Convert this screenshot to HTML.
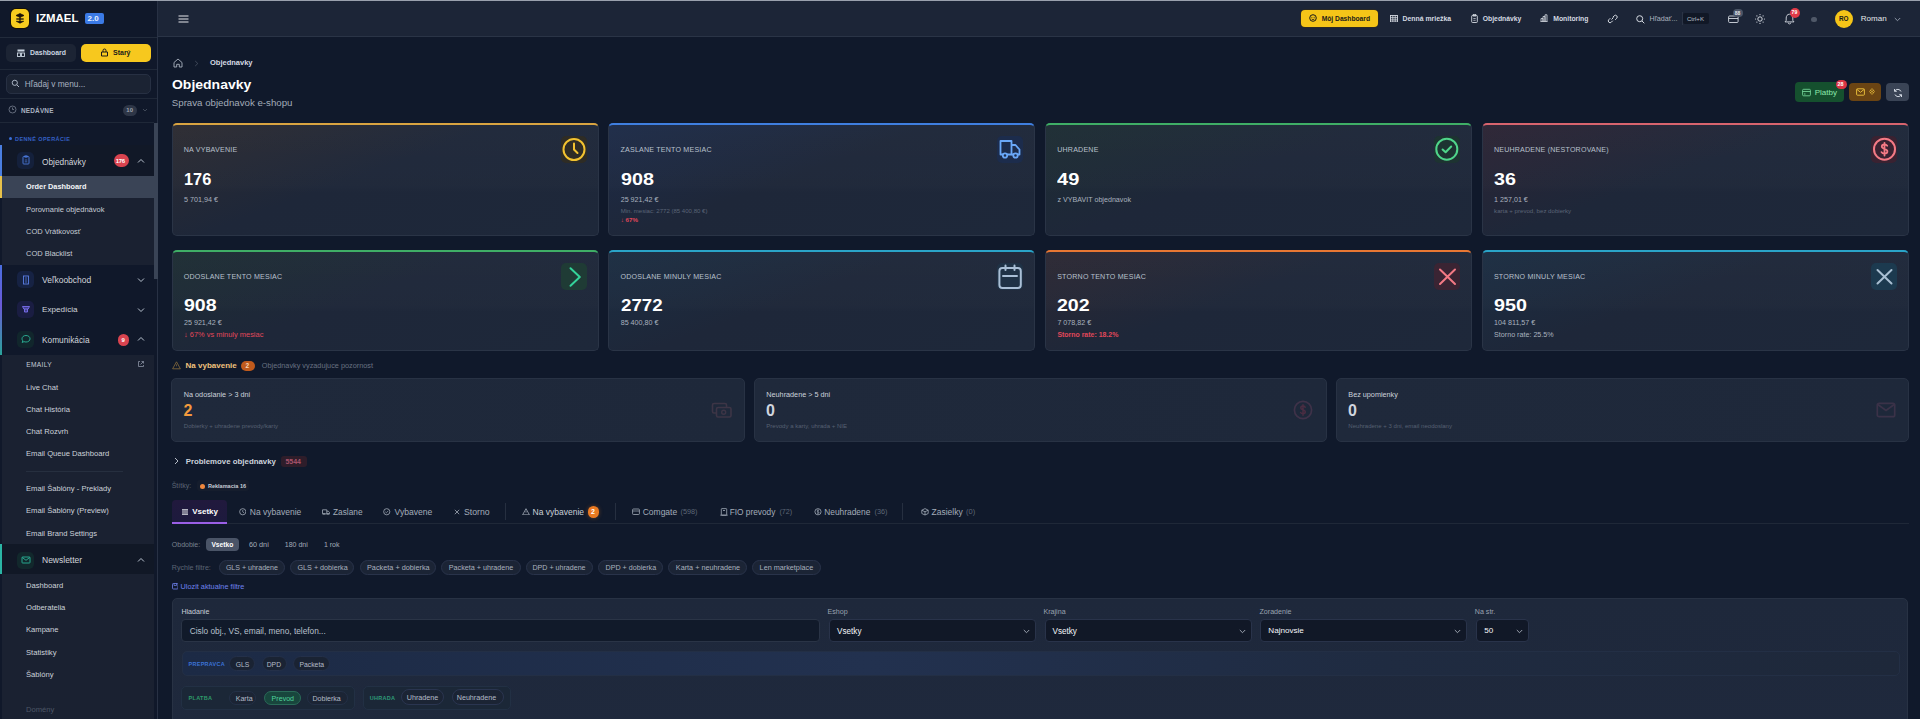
<!DOCTYPE html><html><head><meta charset="utf-8"><style>
html,body{margin:0;padding:0;}
body{width:1920px;height:719px;overflow:hidden;position:relative;background:#10192b;font-family:"Liberation Sans",sans-serif;}
.t{position:absolute;white-space:nowrap;}
.r{position:absolute;box-sizing:border-box;}
</style></head><body>
<div class="r" style="left:0px;top:0px;width:158px;height:719px;background:#10182a;"></div>
<div class="r" style="left:157px;top:0px;width:1px;height:719px;background:#283144;"></div>
<div class="r" style="left:158px;top:0px;width:1762px;height:37px;background:#1c2537;"></div>
<div class="r" style="left:158px;top:36px;width:1762px;height:1px;background:#2a3446;"></div>
<div class="r" style="left:0px;top:0px;width:1920px;height:1px;background:#9aa1ad;"></div>
<div class="r" style="left:0px;top:37px;width:157px;height:1px;background:#222b3b;"></div>
<div class="r" style="left:11px;top:9.3px;width:18px;height:18.4px;background:#f7cc1f;border-radius:5px;box-shadow:0 0 0 1px #141008;"></div>
<svg class="r" style="left:15px;top:12px;" width="10" height="13" viewBox="0 0 10 13" fill="none"><path d="M1 3.5 L5 1.6 L9 3.5 L5 5.3 Z" fill="#1a1208" stroke="#1a1208" stroke-width="0.8" stroke-linejoin="round"/><path d="M1.3 7 H8.7" stroke="#1a1208" stroke-width="1.3"/><path d="M1.3 9.3 H8.7 L5 11.2 Z" fill="#1a1208" stroke="#1a1208" stroke-width="0.7" stroke-linejoin="round"/><path d="M5 5 V11" stroke="#1a1208" stroke-width="1.2"/></svg>
<div class="t" style="left:36px;top:13.00px;font-size:11.4px;line-height:11.4px;font-weight:700;color:#ffffff;letter-spacing:0px;">IZMAEL</div>
<div class="r" style="left:85px;top:13px;width:19px;height:11px;background:#3b7ae6;border-radius:2px;"></div>
<div class="t" style="left:87.5px;top:15.00px;font-size:8px;line-height:8px;font-weight:700;color:#e8f0ff;letter-spacing:0px;">2.0</div>
<div class="r" style="left:6px;top:44px;width:70px;height:18px;background:#1c2434;border-radius:5px;"></div>
<svg class="r" style="left:17px;top:49px;" width="8" height="8" viewBox="0 0 8 8" fill="none"><rect x="0.5" y="0.5" width="7" height="2" fill="#cbd5e1"/><rect x="0.5" y="4" width="3" height="3.5" stroke="#cbd5e1" stroke-width="0.9"/><rect x="4.5" y="4" width="3" height="3.5" stroke="#cbd5e1" stroke-width="0.9"/></svg>
<div class="t" style="left:30px;top:50.00px;font-size:6.9px;line-height:6.9px;font-weight:600;color:#cbd5e1;letter-spacing:0px;">Dashboard</div>
<div class="r" style="left:81px;top:44px;width:70px;height:18px;background:#f7c81e;border-radius:5px;"></div>
<svg class="r" style="left:100px;top:48px;" width="9" height="9" viewBox="0 0 9 9" fill="none"><path d="M1.5 4 H7.5 V8 H1.5 Z M3 4 V2.5 A1.5 1.5 0 0 1 6 2.5 V4" stroke="#1a1a1a" stroke-width="1"/></svg>
<div class="t" style="left:113px;top:49.00px;font-size:7px;line-height:7px;font-weight:600;color:#1a1a1a;letter-spacing:0px;">Starý</div>
<div class="r" style="left:0px;top:69px;width:157px;height:1px;background:#1f2838;"></div>
<div class="r" style="left:6px;top:74px;width:145px;height:19.5px;background:#1b2333;border:1px solid #273043;border-radius:5px;"></div>
<svg class="r" style="left:11px;top:79px;" width="9" height="9" viewBox="0 0 9 9" fill="none"><circle cx="3.8" cy="3.8" r="2.6" stroke="#aab4c3" stroke-width="1"/><path d="M5.8 5.8 L8 8" stroke="#aab4c3" stroke-width="1"/></svg>
<div class="t" style="left:24.8px;top:80.00px;font-size:8.3px;line-height:8.3px;font-weight:400;color:#a9b2c0;letter-spacing:0px;">Hľadaj v menu...</div>
<div class="r" style="left:0px;top:98px;width:157px;height:1px;background:#1f2838;"></div>
<svg class="r" style="left:8px;top:105px;" width="9" height="9" viewBox="0 0 9 9" fill="none"><circle cx="4.5" cy="4.5" r="3.5" stroke="#6b7484" stroke-width="0.9"/><path d="M4.5 2.5 V4.5 H6" stroke="#6b7484" stroke-width="0.9"/></svg>
<div class="t" style="left:21px;top:108.00px;font-size:6.4px;line-height:6.4px;font-weight:700;color:#aab3c0;letter-spacing:0.2px;">NEDÁVNE</div>
<div class="r" style="left:123px;top:105px;width:14px;height:11px;background:#2e3647;border-radius:6px;"></div>
<div class="t" style="left:126.3px;top:107.00px;font-size:6px;line-height:6px;font-weight:600;color:#9ca3af;letter-spacing:0px;">10</div>
<svg class="r" style="left:142px;top:107px;" width="6" height="6" viewBox="0 0 6 6" fill="none"><path d="M1 2 L3 4 L5 2" stroke="#4b5563" stroke-width="0.8"/></svg>
<div class="r" style="left:0px;top:122px;width:154px;height:1px;background:#1f2838;"></div>
<div class="r" style="left:154px;top:123px;width:3.5px;height:156px;background:#3a4456;"></div>
<div class="t" style="left:8.5px;top:137.00px;font-size:5px;line-height:5px;font-weight:700;color:#3b6fd8;letter-spacing:0px;"><span style="display:inline-block;width:3px;height:3px;border-radius:2px;background:#3b6fd8;vertical-align:middle;margin-right:2px;position:relative;top:-1px"></span></div>
<div class="t" style="left:15px;top:137.00px;font-size:5.5px;line-height:5.5px;font-weight:700;color:#3560c4;letter-spacing:0.42px;">DENNÉ OPERÁCIE</div>
<div class="r" style="left:2px;top:145px;width:152px;height:31px;background:#111827;"></div>
<div class="r" style="left:2px;top:198px;width:152px;height:67px;background:#1a2131;"></div>
<div class="r" style="left:0px;top:145px;width:2px;height:31px;background:#4a7ee0;"></div>
<div class="r" style="left:0px;top:176px;width:2px;height:22px;background:#e8c24a;"></div>
<div class="r" style="left:2px;top:176px;width:152px;height:22px;background:#3a4456;"></div>
<div class="r" style="left:0px;top:265px;width:2px;height:90px;background:linear-gradient(#4a6ee0,#6b5ad8 45%,#2aa39a);"></div>
<div class="r" style="left:17px;top:151.7px;width:17px;height:17.0px;background:#14203b;border-radius:5px;"></div>
<svg class="r" style="left:20.5px;top:155.2px;" width="10" height="10" viewBox="0 0 10 10" fill="none"><rect x="2" y="1.5" width="6" height="7.5" rx="0.8" stroke="#4d7de0" stroke-width="0.9"/><rect x="3.5" y="0.7" width="3" height="1.6" rx="0.4" stroke="#4d7de0" stroke-width="0.7"/><path d="M3.8 5 H6.2 M3.8 6.8 H6.2" stroke="#4d7de0" stroke-width="0.7"/></svg>
<div class="t" style="left:42px;top:158.00px;font-size:8.3px;line-height:8.3px;font-weight:500;color:#d1d5db;letter-spacing:0px;">Objednávky</div>
<div class="r" style="left:114px;top:154.4px;width:15px;height:12.299999999999983px;background:#d9434f;border-radius:7px;"></div>
<div class="t" style="left:115.8px;top:158.00px;font-size:6px;line-height:6px;font-weight:700;color:#ffffff;letter-spacing:-0.3px;">176</div>
<svg class="r" style="left:137px;top:158px;" width="8" height="6" viewBox="0 0 8 6" fill="none"><path d="M1 4.5 L4 1.5 L7 4.5" stroke="#cbd5e1" stroke-width="0.9"/></svg>
<div class="t" style="left:26px;top:183.00px;font-size:7.35px;line-height:7.35px;font-weight:600;color:#f3f4f6;letter-spacing:0px;">Order Dashboard</div>
<div class="t" style="left:26px;top:206.00px;font-size:7.5px;line-height:7.5px;font-weight:400;color:#c6ccd5;letter-spacing:0px;">Porovnanie objednávok</div>
<div class="t" style="left:26px;top:228.00px;font-size:7.5px;line-height:7.5px;font-weight:400;color:#c6ccd5;letter-spacing:0px;">COD Vrátkovosť</div>
<div class="t" style="left:26px;top:250.00px;font-size:7.5px;line-height:7.5px;font-weight:400;color:#c6ccd5;letter-spacing:0px;">COD Blacklist</div>
<div class="r" style="left:17px;top:271px;width:17px;height:17px;background:#162243;border-radius:5px;"></div>
<svg class="r" style="left:20.5px;top:274.5px;" width="10" height="10" viewBox="0 0 10 10" fill="none"><rect x="2.5" y="1" width="5" height="8" stroke="#5a7ee6" stroke-width="0.9"/><path d="M4 3 H6 M4 5 H6 M4 7 H6" stroke="#5a7ee6" stroke-width="0.7"/></svg>
<div class="t" style="left:42px;top:276.00px;font-size:8.5px;line-height:8.5px;font-weight:500;color:#d1d5db;letter-spacing:0px;">Veľkoobchod</div>
<svg class="r" style="left:137px;top:277px;" width="8" height="6" viewBox="0 0 8 6" fill="none"><path d="M1 1.5 L4 4.5 L7 1.5" stroke="#cbd5e1" stroke-width="0.9"/></svg>
<div class="r" style="left:17px;top:300.7px;width:17px;height:17.0px;background:#1a1d42;border-radius:5px;"></div>
<svg class="r" style="left:20.5px;top:304.2px;" width="10" height="10" viewBox="0 0 10 10" fill="none"><path d="M1.5 2.5 H8.5 L7.2 5 H2.8 Z M3.5 5 V8 H6.5 V5" stroke="#7b6ff0" stroke-width="0.9" fill="#7b6ff0" fill-opacity="0.4"/></svg>
<div class="t" style="left:42px;top:306.00px;font-size:8.1px;line-height:8.1px;font-weight:500;color:#d1d5db;letter-spacing:0px;">Expedícia</div>
<svg class="r" style="left:137px;top:306.5px;" width="8" height="6" viewBox="0 0 8 6" fill="none"><path d="M1 1.5 L4 4.5 L7 1.5" stroke="#cbd5e1" stroke-width="0.9"/></svg>
<div class="r" style="left:17px;top:330.5px;width:17px;height:17.0px;background:#11262c;border-radius:5px;"></div>
<svg class="r" style="left:20.5px;top:334.0px;" width="10" height="10" viewBox="0 0 10 10" fill="none"><path d="M5 1.5 C7.5 1.5 9 3 9 4.8 C9 6.6 7.5 8 5 8 C4.3 8 3.6 7.9 3 7.6 L1.2 8.5 L1.8 6.8 C1.2 6.2 1 5.5 1 4.8 C1 3 2.5 1.5 5 1.5 Z" stroke="#2bb59a" stroke-width="0.9"/></svg>
<div class="t" style="left:42px;top:336.00px;font-size:8.3px;line-height:8.3px;font-weight:500;color:#d1d5db;letter-spacing:0px;">Komunikácia</div>
<div class="r" style="left:118px;top:333.5px;width:11px;height:12.0px;background:#d9434f;border-radius:6px;"></div>
<div class="t" style="left:121.5px;top:337.00px;font-size:6px;line-height:6px;font-weight:700;color:#ffffff;letter-spacing:0px;">9</div>
<svg class="r" style="left:137px;top:336px;" width="8" height="6" viewBox="0 0 8 6" fill="none"><path d="M1 4.5 L4 1.5 L7 4.5" stroke="#cbd5e1" stroke-width="0.9"/></svg>
<div class="r" style="left:2px;top:355px;width:152px;height:189px;background:#1a2131;"></div>
<div class="t" style="left:26.2px;top:362.00px;font-size:6.6px;line-height:6.6px;font-weight:500;color:#c6ccd5;letter-spacing:0.35px;">EMAILY</div>
<svg class="r" style="left:137px;top:360px;" width="8" height="8" viewBox="0 0 8 8" fill="none"><path d="M3 1.5 H1.5 V6.5 H6.5 V5 M4.5 1.5 H6.5 V3.5 M6.5 1.5 L3.5 4.5" stroke="#8a93a3" stroke-width="0.8"/></svg>
<div class="t" style="left:26.2px;top:384.00px;font-size:8.1px;line-height:8.1px;font-weight:400;color:#ccd2da;letter-spacing:0px;transform:scaleX(0.94);transform-origin:0 0;">Live Chat</div>
<div class="t" style="left:26.2px;top:406.00px;font-size:8.1px;line-height:8.1px;font-weight:400;color:#ccd2da;letter-spacing:0px;transform:scaleX(0.94);transform-origin:0 0;">Chat História</div>
<div class="t" style="left:26.2px;top:428.00px;font-size:8.1px;line-height:8.1px;font-weight:400;color:#ccd2da;letter-spacing:0px;transform:scaleX(0.94);transform-origin:0 0;">Chat Rozvrh</div>
<div class="t" style="left:26.2px;top:450.00px;font-size:8.1px;line-height:8.1px;font-weight:400;color:#ccd2da;letter-spacing:0px;transform:scaleX(0.94);transform-origin:0 0;">Email Queue Dashboard</div>
<div class="r" style="left:26px;top:470.5px;width:97px;height:0.8000000000000114px;background:#262f3f;"></div>
<div class="t" style="left:26.2px;top:485.00px;font-size:8.1px;line-height:8.1px;font-weight:400;color:#ccd2da;letter-spacing:0px;transform:scaleX(0.94);transform-origin:0 0;">Email Šablóny - Preklady</div>
<div class="t" style="left:26.2px;top:507.00px;font-size:8.1px;line-height:8.1px;font-weight:400;color:#ccd2da;letter-spacing:0px;transform:scaleX(0.94);transform-origin:0 0;">Email Šablóny (Preview)</div>
<div class="t" style="left:26.2px;top:530.00px;font-size:8.1px;line-height:8.1px;font-weight:400;color:#ccd2da;letter-spacing:0px;transform:scaleX(0.94);transform-origin:0 0;">Email Brand Settings</div>
<div class="r" style="left:2px;top:544px;width:152px;height:30px;background:#111826;"></div>
<div class="r" style="left:0px;top:544px;width:2px;height:30px;background:#2bb5a5;"></div>
<div class="r" style="left:17px;top:551.7px;width:17px;height:17.0px;background:#12282c;border-radius:5px;"></div>
<svg class="r" style="left:20.5px;top:555.2px;" width="10" height="10" viewBox="0 0 10 10" fill="none"><rect x="1" y="2" width="8" height="6" rx="0.6" stroke="#2bb59a" stroke-width="0.9"/><path d="M1.3 2.5 L5 5.3 L8.7 2.5" stroke="#2bb59a" stroke-width="0.9"/></svg>
<div class="t" style="left:42px;top:556.00px;font-size:8.5px;line-height:8.5px;font-weight:500;color:#d1d5db;letter-spacing:0px;">Newsletter</div>
<svg class="r" style="left:137px;top:556.5px;" width="8" height="6" viewBox="0 0 8 6" fill="none"><path d="M1 4.5 L4 1.5 L7 4.5" stroke="#cbd5e1" stroke-width="0.9"/></svg>
<div class="r" style="left:2px;top:574px;width:152px;height:145px;background:#1a2131;"></div>
<div class="t" style="left:26.2px;top:582.00px;font-size:8.1px;line-height:8.1px;font-weight:400;color:#ccd2da;letter-spacing:0px;transform:scaleX(0.94);transform-origin:0 0;">Dashboard</div>
<div class="t" style="left:26.2px;top:604.00px;font-size:8.1px;line-height:8.1px;font-weight:400;color:#ccd2da;letter-spacing:0px;transform:scaleX(0.94);transform-origin:0 0;">Odberatelia</div>
<div class="t" style="left:26.2px;top:626.00px;font-size:8.1px;line-height:8.1px;font-weight:400;color:#ccd2da;letter-spacing:0px;transform:scaleX(0.94);transform-origin:0 0;">Kampane</div>
<div class="t" style="left:26.2px;top:649.00px;font-size:8.1px;line-height:8.1px;font-weight:400;color:#ccd2da;letter-spacing:0px;transform:scaleX(0.94);transform-origin:0 0;">Statistiky</div>
<div class="t" style="left:26.2px;top:671.00px;font-size:8.1px;line-height:8.1px;font-weight:400;color:#ccd2da;letter-spacing:0px;transform:scaleX(0.94);transform-origin:0 0;">Šablóny</div>
<div class="t" style="left:26.2px;top:706.00px;font-size:8.1px;line-height:8.1px;font-weight:400;color:#4d5666;letter-spacing:0px;transform:scaleX(0.94);transform-origin:0 0;">Domény</div>
<svg class="r" style="left:177.5px;top:14.5px;" width="11" height="8" viewBox="0 0 11 8" fill="none"><path d="M0.5 1 H10.5 M0.5 4 H10.5 M0.5 7 H10.5" stroke="#e5e7eb" stroke-width="1.1"/></svg>
<div class="r" style="left:1300.8px;top:9.7px;width:77.0px;height:17.3px;background:#f5c518;border-radius:4px;box-shadow:0 0 0 0.5px #3a2f10;"></div>
<svg class="r" style="left:1308.5px;top:14.0px;" width="8" height="8" viewBox="0 0 8 8" fill="none"><circle cx="4" cy="4" r="3.3" stroke="#1a1a1a" stroke-width="1"/><circle cx="2.9" cy="3.3" r="0.5" fill="#1a1a1a"/><circle cx="5.1" cy="3.3" r="0.5" fill="#1a1a1a"/><path d="M2.6 5 Q4 6.3 5.4 5" stroke="#1a1a1a" stroke-width="0.8"/></svg>
<div class="t" style="left:1321.7px;top:16.00px;font-size:6.7px;line-height:6.7px;font-weight:600;color:#1a1a1a;letter-spacing:0px;">Môj Dashboard</div>
<svg class="r" style="left:1389.5px;top:14.5px;" width="8" height="7.5" viewBox="0 0 8 7.5" fill="none"><rect x="0.5" y="0.5" width="7" height="6.5" stroke="#d5dae2" stroke-width="0.9"/><path d="M0.5 2.7 H7.5 M0.5 4.9 H7.5 M2.8 0.5 V7 M5.2 0.5 V7" stroke="#d5dae2" stroke-width="0.8"/></svg>
<div class="t" style="left:1402.5px;top:16.00px;font-size:6.9px;line-height:6.9px;font-weight:600;color:#d5dae2;letter-spacing:0px;">Denná mriežka</div>
<svg class="r" style="left:1470.5px;top:14.0px;" width="7" height="9" viewBox="0 0 7 9" fill="none"><rect x="0.7" y="1.5" width="5.6" height="7" rx="0.7" stroke="#d5dae2" stroke-width="0.9"/><rect x="2.2" y="0.5" width="2.6" height="1.6" stroke="#d5dae2" stroke-width="0.7"/><path d="M2.3 4.5 H4.7 M2.3 6.3 H4.7" stroke="#d5dae2" stroke-width="0.7"/></svg>
<div class="t" style="left:1482.8px;top:16.00px;font-size:6.8px;line-height:6.8px;font-weight:600;color:#d5dae2;letter-spacing:0px;">Objednávky</div>
<svg class="r" style="left:1540px;top:14.0px;" width="8" height="8" viewBox="0 0 8 8" fill="none"><path d="M0.5 7.5 H7.5 M1 7.5 V4.5 H3 V7.5 M3 7.5 V2.5 H5 V7.5 M5 7.5 V0.8 H7 V7.5" stroke="#d5dae2" stroke-width="0.8"/></svg>
<div class="t" style="left:1553.3px;top:16.00px;font-size:6.8px;line-height:6.8px;font-weight:600;color:#d5dae2;letter-spacing:0px;">Monitoring</div>
<svg class="r" style="left:1606.5px;top:14px;" width="11" height="10" viewBox="0 0 11 10" fill="none"><path d="M4.5 5.5 L6.5 3.5 M3.3 4.2 L1.8 5.7 A1.7 1.7 0 0 0 4.3 8.2 L5.8 6.7 M5.7 3.3 L7.2 1.8 A1.7 1.7 0 0 1 9.7 4.3 L8.2 5.8" stroke="#d5dae2" stroke-width="1"/></svg>
<svg class="r" style="left:1635.8px;top:14.5px;" width="9" height="9" viewBox="0 0 9 9" fill="none"><circle cx="3.7" cy="3.7" r="3" stroke="#d5dae2" stroke-width="1"/><path d="M6 6 L8.3 8.3" stroke="#d5dae2" stroke-width="1"/></svg>
<div class="t" style="left:1649.5px;top:15.00px;font-size:7.2px;line-height:7.2px;font-weight:400;color:#aab2be;letter-spacing:0px;">Hľadať...</div>
<div class="r" style="left:1683px;top:13px;width:25.5px;height:11px;background:#111826;border-radius:2px;"></div>
<div class="r" style="left:1681.8px;top:12px;width:0.7000000000000455px;height:13px;background:#2b3445;"></div>
<div class="t" style="left:1686.9px;top:16.00px;font-size:6.1px;line-height:6.1px;font-weight:400;color:#b9c0cb;letter-spacing:0px;">Ctrl+K</div>
<svg class="r" style="left:1727.5px;top:14px;" width="11" height="9" viewBox="0 0 11 9" fill="none"><rect x="0.6" y="2" width="9.5" height="6.5" rx="1" stroke="#d5dae2" stroke-width="0.9"/><path d="M0.6 4.5 H10" stroke="#d5dae2" stroke-width="0.9"/></svg>
<div class="r" style="left:1733.3px;top:9.2px;width:10.0px;height:8.3px;background:#4b5567;border-radius:5px;"></div>
<div class="t" style="left:1734.8px;top:11.00px;font-size:5px;line-height:5px;font-weight:700;color:#e5e7eb;letter-spacing:0px;">88</div>
<svg class="r" style="left:1755.1px;top:13.6px;" width="10" height="10" viewBox="0 0 10 10" fill="none"><circle cx="5" cy="5" r="2.2" stroke="#d5dae2" stroke-width="1"/><g fill="#d5dae2"><circle cx="5" cy="0.6" r="0.6"/><circle cx="5" cy="9.4" r="0.6"/><circle cx="0.6" cy="5" r="0.6"/><circle cx="9.4" cy="5" r="0.6"/><circle cx="1.9" cy="1.9" r="0.6"/><circle cx="8.1" cy="8.1" r="0.6"/><circle cx="1.9" cy="8.1" r="0.6"/><circle cx="8.1" cy="1.9" r="0.6"/></g></svg>
<svg class="r" style="left:1783.5px;top:13px;" width="11" height="11.5" viewBox="0 0 11 11.5" fill="none"><path d="M5.5 1.2 C3.3 1.2 2.2 3 2.2 5 V7.4 L1 8.9 H10 L8.8 7.4 V5 C8.8 3 7.7 1.2 5.5 1.2 Z" stroke="#d5dae2" stroke-width="0.9" stroke-linejoin="round"/><path d="M4.2 9.6 A1.3 1.3 0 0 0 6.8 9.6" stroke="#d5dae2" stroke-width="0.9"/></svg>
<div class="r" style="left:1789.7px;top:7.5px;width:10.299999999999955px;height:10.0px;background:#e03a47;border-radius:5px;"></div>
<div class="t" style="left:1791.6px;top:10.00px;font-size:5.2px;line-height:5.2px;font-weight:700;color:#ffffff;letter-spacing:0px;">79</div>
<div class="r" style="left:1810.8px;top:16.7px;width:6.400000000000091px;height:5.800000000000001px;background:#4f5868;border-radius:4px;"></div>
<div class="r" style="left:1834.7px;top:9.7px;width:18.59999999999991px;height:18.3px;background:#f5c518;border-radius:10px;"></div>
<div class="t" style="left:1839px;top:16.00px;font-size:6.4px;line-height:6.4px;font-weight:700;color:#1a1a1a;letter-spacing:0px;">RO</div>
<div class="t" style="left:1860.8px;top:15.00px;font-size:8px;line-height:8px;font-weight:500;color:#e5e7eb;letter-spacing:0px;">Roman</div>
<svg class="r" style="left:1894px;top:16.5px;" width="7" height="5" viewBox="0 0 7 5" fill="none"><path d="M0.8 1 L3.5 3.7 L6.2 1" stroke="#9aa3b1" stroke-width="0.9"/></svg>
<svg class="r" style="left:172.5px;top:58px;" width="10" height="10" viewBox="0 0 10 10" fill="none"><path d="M1 4.5 L5 1 L9 4.5 V9 H6.3 V6.3 H3.7 V9 H1 Z" stroke="#aab3c0" stroke-width="0.9" stroke-linejoin="round"/></svg>
<svg class="r" style="left:194px;top:59.5px;" width="5" height="7" viewBox="0 0 5 7" fill="none"><path d="M1.2 1 L3.8 3.5 L1.2 6" stroke="#4b5465" stroke-width="0.8"/></svg>
<div class="t" style="left:210px;top:59.00px;font-size:7.5px;line-height:7.5px;font-weight:700;color:#d6dbe3;letter-spacing:0px;">Objednavky</div>
<div class="t" style="left:171.6px;top:78.00px;font-size:13.2px;line-height:13.2px;font-weight:700;color:#ffffff;letter-spacing:0px;transform:scaleX(1.06);transform-origin:0 0;">Objednavky</div>
<div class="t" style="left:171.8px;top:98.00px;font-size:9.7px;line-height:9.7px;font-weight:400;color:#a3acb9;letter-spacing:0px;">Sprava objednavok e-shopu</div>
<div class="r" style="left:1795.3px;top:82px;width:48.5px;height:20px;background:#15502e;border-radius:4px;"></div>
<svg class="r" style="left:1801.5px;top:87.5px;" width="9" height="9" viewBox="0 0 9 9" fill="none"><rect x="0.6" y="1.3" width="7.8" height="6.5" rx="1" stroke="#7ee2a3" stroke-width="0.8"/><path d="M0.6 3.5 H8.4 M2 6 H3.5" stroke="#7ee2a3" stroke-width="0.8"/></svg>
<div class="t" style="left:1814.7px;top:89.00px;font-size:8px;line-height:8px;font-weight:500;color:#8be9ac;letter-spacing:0px;">Platby</div>
<div class="r" style="left:1835.8px;top:79.5px;width:11.700000000000045px;height:9.099999999999994px;background:#dc3545;border-radius:5px;"></div>
<div class="t" style="left:1837.6px;top:82.00px;font-size:5.4px;line-height:5.4px;font-weight:700;color:#ffffff;letter-spacing:0px;">28</div>
<div class="r" style="left:1849px;top:83px;width:32px;height:18px;background:#6b4413;border-radius:4px;"></div>
<svg class="r" style="left:1856px;top:87.5px;" width="9" height="8" viewBox="0 0 9 8" fill="none"><rect x="0.6" y="0.8" width="7.8" height="6.4" rx="0.8" stroke="#f2c53d" stroke-width="0.9"/><path d="M0.8 1.3 L4.5 4.3 L8.2 1.3" stroke="#f2c53d" stroke-width="0.9"/></svg>
<svg class="r" style="left:1868.5px;top:88px;" width="6" height="7" viewBox="0 0 6 7" fill="none"><path d="M3 0.5 L5.5 3.5 L3 6.5 L0.5 3.5 Z M1 2 L5 5 M5 2 L1 5" stroke="#f2c53d" stroke-width="0.6"/></svg>
<div class="r" style="left:1886px;top:83px;width:22.5px;height:18px;background:#3a4456;border-radius:4px;"></div>
<svg class="r" style="left:1892.5px;top:87.5px;" width="10" height="10" viewBox="0 0 10 10" fill="none"><path d="M8 3.5 A3.5 3.5 0 0 0 1.8 3 M2 6.5 A3.5 3.5 0 0 0 8.2 7 M1.5 1 V3.3 H3.8 M8.5 9 V6.7 H6.2" stroke="#e2e8f0" stroke-width="0.9"/></svg>
<div class="r" style="left:171.5px;top:122.6px;width:427px;height:113.0px;border-radius:5px;background:linear-gradient(180deg,rgba(255,255,255,0.018) 0%,rgba(255,255,255,0.012) 55%,rgba(255,255,255,0) 62%),linear-gradient(160deg,#2c2b31 0%,#1e2739 45%,#1e283a 100%);border:1px solid #2a3446;border-top:2px solid #d9a441;"></div>
<div class="t" style="left:183.8px;top:147.00px;font-size:7.1px;line-height:7.1px;font-weight:400;color:#b8c0cc;letter-spacing:0.2px;">NA VYBAVENIE</div>
<div class="t" style="left:184.0px;top:170.70px;font-size:17px;line-height:17px;font-weight:700;color:#ffffff;transform:scaleX(0.96);transform-origin:0 0;">176</div>
<div class="t" style="left:184.0px;top:196.00px;font-size:7.2px;line-height:7.2px;font-weight:400;color:#a9b2bf;letter-spacing:0px;">5 701,94 €</div>
<div class="r" style="left:560.5px;top:136.0px;width:26.0px;height:27.0px;background:#2e2c25;border-radius:5px;"></div>
<svg class="r" style="left:560.5px;top:136.0px;" width="26" height="27" viewBox="0 0 26 27" fill="none"><circle cx="13" cy="13.5" r="10.5" stroke="#f2c230" stroke-width="2"/><path d="M13 7.5 V13.5 L16.5 17" stroke="#f2c230" stroke-width="2" stroke-linecap="round"/></svg>
<div class="r" style="left:608.2px;top:122.6px;width:427px;height:113.0px;border-radius:5px;background:linear-gradient(180deg,rgba(255,255,255,0.018) 0%,rgba(255,255,255,0.012) 55%,rgba(255,255,255,0) 62%),linear-gradient(160deg,#1d2b48 0%,#1e2739 45%,#1e283a 100%);border:1px solid #2a3446;border-top:2px solid #3f7fe0;"></div>
<div class="t" style="left:620.5px;top:147.00px;font-size:7.1px;line-height:7.1px;font-weight:400;color:#b8c0cc;letter-spacing:0.2px;">ZASLANE TENTO MESIAC</div>
<div class="t" style="left:620.7px;top:170.70px;font-size:17px;line-height:17px;font-weight:700;color:#ffffff;transform:scaleX(1.16);transform-origin:0 0;">908</div>
<div class="t" style="left:620.7px;top:197.00px;font-size:7.15px;line-height:7.15px;font-weight:400;color:#a9b2bf;letter-spacing:0px;">25 921,42 €</div>
<div class="t" style="left:620.7px;top:208.00px;font-size:6.05px;line-height:6.05px;font-weight:400;color:#5b6577;letter-spacing:0px;">Min. mesiac: 2772 (85 400,80 €)</div>
<div class="t" style="left:620.7px;top:217.00px;font-size:6.2px;line-height:6.2px;font-weight:700;color:#e0475a;letter-spacing:0px;">↓ 67%</div>
<div class="r" style="left:997.2px;top:136.0px;width:26.0px;height:27.0px;background:#1c2c4c;border-radius:5px;"></div>
<svg class="r" style="left:997.2px;top:136.0px;" width="26" height="27" viewBox="0 0 26 27" fill="none"><path d="M3.5 5 H14.5 V18.5 H3.5 Z" stroke="#6aa8f8" stroke-width="1.8" stroke-linejoin="round"/><path d="M14.5 9 H18.5 L22.5 13.5 V18.5 H14.5" stroke="#6aa8f8" stroke-width="1.8" stroke-linejoin="round"/><circle cx="8" cy="19.5" r="2.2" fill="#1c2c4c" stroke="#6aa8f8" stroke-width="1.8"/><circle cx="18.5" cy="19.5" r="2.2" fill="#1c2c4c" stroke="#6aa8f8" stroke-width="1.8"/></svg>
<div class="r" style="left:1044.9px;top:122.6px;width:427px;height:113.0px;border-radius:5px;background:linear-gradient(180deg,rgba(255,255,255,0.018) 0%,rgba(255,255,255,0.012) 55%,rgba(255,255,255,0) 62%),linear-gradient(160deg,#1d2d33 0%,#1e2739 45%,#1e283a 100%);border:1px solid #2a3446;border-top:2px solid #3fae66;"></div>
<div class="t" style="left:1057.2px;top:147.00px;font-size:7.1px;line-height:7.1px;font-weight:400;color:#b8c0cc;letter-spacing:0.2px;">UHRADENE</div>
<div class="t" style="left:1057.4px;top:170.70px;font-size:17px;line-height:17px;font-weight:700;color:#ffffff;transform:scaleX(1.18);transform-origin:0 0;">49</div>
<div class="t" style="left:1057.4px;top:197.00px;font-size:7.15px;line-height:7.15px;font-weight:400;color:#a9b2bf;letter-spacing:0px;">z VYBAVIT objednavok</div>
<div class="r" style="left:1433.9px;top:136.0px;width:26.0px;height:27.0px;background:#1d3331;border-radius:5px;"></div>
<svg class="r" style="left:1433.9px;top:136.0px;" width="26" height="27" viewBox="0 0 26 27" fill="none"><circle cx="12.8" cy="13.2" r="10.5" stroke="#4fd58a" stroke-width="2"/><path d="M8.6 13.5 L11.6 16.3 L17.2 10.5" stroke="#4fd58a" stroke-width="2" stroke-linecap="round" stroke-linejoin="round"/></svg>
<div class="r" style="left:1481.6px;top:122.6px;width:427px;height:113.0px;border-radius:5px;background:linear-gradient(180deg,rgba(255,255,255,0.018) 0%,rgba(255,255,255,0.012) 55%,rgba(255,255,255,0) 62%),linear-gradient(160deg,#2c2434 0%,#1e2739 45%,#1e283a 100%);border:1px solid #2a3446;border-top:2px solid #d8646e;"></div>
<div class="t" style="left:1493.8999999999999px;top:147.00px;font-size:7.1px;line-height:7.1px;font-weight:400;color:#b8c0cc;letter-spacing:0.2px;">NEUHRADENE (NESTOROVANE)</div>
<div class="t" style="left:1494.1px;top:170.70px;font-size:17px;line-height:17px;font-weight:700;color:#ffffff;transform:scaleX(1.16);transform-origin:0 0;">36</div>
<div class="t" style="left:1494.1px;top:197.00px;font-size:7.15px;line-height:7.15px;font-weight:400;color:#a9b2bf;letter-spacing:0px;">1 257,01 €</div>
<div class="t" style="left:1494.1px;top:208.00px;font-size:6.1px;line-height:6.1px;font-weight:400;color:#5b6577;letter-spacing:0px;">karta + prevod, bez dobierky</div>
<div class="r" style="left:1870.6px;top:136.0px;width:26.0px;height:27.0px;background:#3a2231;border-radius:5px;"></div>
<svg class="r" style="left:1870.6px;top:136.0px;" width="26" height="27" viewBox="0 0 26 27" fill="none"><circle cx="13.5" cy="13.2" r="10.5" stroke="#f47a85" stroke-width="2"/><path d="M16.2 9.8 C15.6 8.9 14.6 8.5 13.5 8.5 C11.8 8.5 10.8 9.4 10.8 10.6 C10.8 13.3 16.4 12.3 16.4 15.3 C16.4 16.6 15.2 17.6 13.5 17.6 C12.1 17.6 11 17 10.5 16.1 M13.5 6.8 V19.6" stroke="#f47a85" stroke-width="1.8" stroke-linecap="round"/></svg>
<div class="r" style="left:171.5px;top:250px;width:427px;height:101px;border-radius:5px;background:linear-gradient(180deg,rgba(255,255,255,0.018) 0%,rgba(255,255,255,0.012) 55%,rgba(255,255,255,0) 62%),linear-gradient(160deg,#1d2d33 0%,#1e2739 45%,#1e283a 100%);border:1px solid #2a3446;border-top:2px solid #3fae66;"></div>
<div class="t" style="left:183.8px;top:274.00px;font-size:7.1px;line-height:7.1px;font-weight:400;color:#b8c0cc;letter-spacing:0.2px;">ODOSLANE TENTO MESIAC</div>
<div class="t" style="left:184.0px;top:297.10px;font-size:17px;line-height:17px;font-weight:700;color:#ffffff;transform:scaleX(1.15);transform-origin:0 0;">908</div>
<div class="t" style="left:184.0px;top:320.00px;font-size:7.15px;line-height:7.15px;font-weight:400;color:#a9b2bf;letter-spacing:0px;">25 921,42 €</div>
<div class="t" style="left:184.0px;top:331.00px;font-size:7.45px;line-height:7.45px;font-weight:500;color:#e0475a;letter-spacing:0px;">↓ 67% vs minuly mesiac</div>
<div class="r" style="left:560.5px;top:262.5px;width:26.0px;height:27.0px;background:#1f3b35;border-radius:5px;"></div>
<svg class="r" style="left:560.5px;top:262.5px;" width="26" height="27" viewBox="0 0 26 27" fill="none"><path d="M9.5 5.3 L18.8 14 L9.5 22.8" stroke="#34d39a" stroke-width="2" stroke-linecap="round" stroke-linejoin="round"/></svg>
<div class="r" style="left:608.2px;top:250px;width:427px;height:101px;border-radius:5px;background:linear-gradient(180deg,rgba(255,255,255,0.018) 0%,rgba(255,255,255,0.012) 55%,rgba(255,255,255,0) 62%),linear-gradient(160deg,#1b2d42 0%,#1e2739 45%,#1e283a 100%);border:1px solid #2a3446;border-top:2px solid #2aa4c8;"></div>
<div class="t" style="left:620.5px;top:274.00px;font-size:7.1px;line-height:7.1px;font-weight:400;color:#b8c0cc;letter-spacing:0.2px;">ODOSLANE MINULY MESIAC</div>
<div class="t" style="left:620.7px;top:297.10px;font-size:17px;line-height:17px;font-weight:700;color:#ffffff;transform:scaleX(1.1);transform-origin:0 0;">2772</div>
<div class="t" style="left:620.7px;top:320.00px;font-size:7.15px;line-height:7.15px;font-weight:400;color:#a9b2bf;letter-spacing:0px;">85 400,80 €</div>
<div class="r" style="left:997.2px;top:262.5px;width:26.0px;height:27.0px;background:#1f3246;border-radius:5px;"></div>
<svg class="r" style="left:997.2px;top:262.5px;" width="26" height="27" viewBox="0 0 26 27" fill="none"><rect x="2.4" y="5" width="21.4" height="20" rx="3" stroke="#a9bfd6" stroke-width="2"/><path d="M8.5 2.5 V7 M17.5 2.5 V7 M6 13 H20" stroke="#a9bfd6" stroke-width="2" stroke-linecap="round"/></svg>
<div class="r" style="left:1044.9px;top:250px;width:427px;height:101px;border-radius:5px;background:linear-gradient(180deg,rgba(255,255,255,0.018) 0%,rgba(255,255,255,0.012) 55%,rgba(255,255,255,0) 62%),linear-gradient(160deg,#2c2833 0%,#1e2739 45%,#1e283a 100%);border:1px solid #2a3446;border-top:2px solid #e87733;"></div>
<div class="t" style="left:1057.2px;top:274.00px;font-size:7.1px;line-height:7.1px;font-weight:400;color:#b8c0cc;letter-spacing:0.2px;">STORNO TENTO MESIAC</div>
<div class="t" style="left:1057.4px;top:297.10px;font-size:17px;line-height:17px;font-weight:700;color:#ffffff;transform:scaleX(1.15);transform-origin:0 0;">202</div>
<div class="t" style="left:1057.4px;top:320.00px;font-size:7.15px;line-height:7.15px;font-weight:400;color:#a9b2bf;letter-spacing:0px;">7 078,82 €</div>
<div class="t" style="left:1057.4px;top:332.00px;font-size:6.95px;line-height:6.95px;font-weight:700;color:#e0475a;letter-spacing:0px;">Storno rate: 18.2%</div>
<div class="r" style="left:1433.9px;top:262.5px;width:26.0px;height:27.0px;background:#3a2433;border-radius:5px;"></div>
<svg class="r" style="left:1433.9px;top:262.5px;" width="26" height="27" viewBox="0 0 26 27" fill="none"><path d="M6 6.5 L21 21 M21 6.5 L6 21" stroke="#f47a85" stroke-width="2" stroke-linecap="round"/></svg>
<div class="r" style="left:1481.6px;top:250px;width:427px;height:101px;border-radius:5px;background:linear-gradient(180deg,rgba(255,255,255,0.018) 0%,rgba(255,255,255,0.012) 55%,rgba(255,255,255,0) 62%),linear-gradient(160deg,#1b2d42 0%,#1e2739 45%,#1e283a 100%);border:1px solid #2a3446;border-top:2px solid #2aa4c8;"></div>
<div class="t" style="left:1493.8999999999999px;top:274.00px;font-size:7.1px;line-height:7.1px;font-weight:400;color:#b8c0cc;letter-spacing:0.2px;">STORNO MINULY MESIAC</div>
<div class="t" style="left:1494.1px;top:297.10px;font-size:17px;line-height:17px;font-weight:700;color:#ffffff;transform:scaleX(1.16);transform-origin:0 0;">950</div>
<div class="t" style="left:1494.1px;top:320.00px;font-size:7.15px;line-height:7.15px;font-weight:400;color:#a9b2bf;letter-spacing:0px;">104 811,57 €</div>
<div class="t" style="left:1494.1px;top:332.00px;font-size:7.15px;line-height:7.15px;font-weight:400;color:#a9b2bf;letter-spacing:0px;">Storno rate: 25.5%</div>
<div class="r" style="left:1870.6px;top:262.5px;width:26.0px;height:27.0px;background:#1c3a4f;border-radius:5px;"></div>
<svg class="r" style="left:1870.6px;top:262.5px;" width="26" height="27" viewBox="0 0 26 27" fill="none"><path d="M6.5 7 L20.5 20.5 M20.5 7 L6.5 20.5" stroke="#a9bfd2" stroke-width="2" stroke-linecap="round"/></svg>
<svg class="r" style="left:171.5px;top:361px;" width="9" height="8.5" viewBox="0 0 9 8.5" fill="none"><path d="M4.5 0.8 L8.4 7.8 H0.6 Z" stroke="#8a6d3c" stroke-width="0.8" stroke-linejoin="round"/><path d="M4.5 3.3 V5.3" stroke="#8a6d3c" stroke-width="0.7"/></svg>
<div class="t" style="left:185.6px;top:362.00px;font-size:8px;line-height:8px;font-weight:700;color:#f1c27d;letter-spacing:0px;">Na vybavenie</div>
<div class="r" style="left:240.6px;top:360.5px;width:14.300000000000011px;height:10.5px;background:#c05a1c;border-radius:6px;"></div>
<div class="t" style="left:245.5px;top:363.00px;font-size:6.5px;line-height:6.5px;font-weight:700;color:#f6d5b8;letter-spacing:0px;">2</div>
<div class="t" style="left:261.8px;top:362.00px;font-size:7.3px;line-height:7.3px;font-weight:400;color:#687182;letter-spacing:0px;">Objednavky vyzadujuce pozornost</div>
<div class="r" style="left:171px;top:378px;width:574px;height:64px;border-radius:5px;background:linear-gradient(90deg,#1f293b,#1e283a);border:1px solid #283244;"></div>
<div class="t" style="left:183.8px;top:391.00px;font-size:7.25px;line-height:7.25px;font-weight:400;color:#cdd3dc;letter-spacing:0px;">Na odoslanie &gt; 3 dni</div>
<div class="t" style="left:183.6px;top:403.00px;font-size:16px;line-height:16px;font-weight:700;color:#f39a3d;letter-spacing:0px;">2</div>
<div class="t" style="left:183.8px;top:423.00px;font-size:6.05px;line-height:6.05px;font-weight:400;color:#566072;letter-spacing:0px;">Dobierky + uhradene prevody/karty</div>
<svg class="r" style="left:711px;top:402px" width="22" height="17" viewBox="0 0 22 17" fill="none"><rect x="1.5" y="1.5" width="14" height="9.5" rx="1.5" stroke="#3d3546" stroke-width="1.6"/><rect x="5.5" y="5.5" width="14.5" height="9.5" rx="1.5" fill="#1f293b" stroke="#3d3546" stroke-width="1.6"/><circle cx="12.7" cy="10.2" r="2" stroke="#3d3546" stroke-width="1.4"/></svg>
<div class="r" style="left:753.5px;top:378px;width:573.5px;height:64px;border-radius:5px;background:linear-gradient(90deg,#1f293b,#1e283a);border:1px solid #283244;"></div>
<div class="t" style="left:766.3px;top:391.00px;font-size:7.25px;line-height:7.25px;font-weight:400;color:#cdd3dc;letter-spacing:0px;">Neuhradene &gt; 5 dni</div>
<div class="t" style="left:766.1px;top:403.00px;font-size:16px;line-height:16px;font-weight:700;color:#cfd5de;letter-spacing:0px;">0</div>
<div class="t" style="left:766.3px;top:423.00px;font-size:6.05px;line-height:6.05px;font-weight:400;color:#566072;letter-spacing:0px;">Prevody a karty, uhrada + NIE</div>
<svg class="r" style="left:1293px;top:399.5px" width="20" height="20" viewBox="0 0 20 20" fill="none"><circle cx="10" cy="10" r="8.6" stroke="#3f3249" stroke-width="1.7"/><path d="M12.2 7.2 C11.7 6.5 10.9 6.1 10 6.1 C8.6 6.1 7.8 6.9 7.8 7.9 C7.8 10.1 12.3 9.3 12.3 11.8 C12.3 12.9 11.3 13.7 10 13.7 C8.9 13.7 8 13.2 7.6 12.5 M10 4.8 V15.2" stroke="#4a2d42" stroke-width="1.5" stroke-linecap="round"/></svg>
<div class="r" style="left:1335.5px;top:378px;width:573.5px;height:64px;border-radius:5px;background:linear-gradient(90deg,#1f293b,#1e283a);border:1px solid #283244;"></div>
<div class="t" style="left:1348.3px;top:391.00px;font-size:7.25px;line-height:7.25px;font-weight:400;color:#cdd3dc;letter-spacing:0px;">Bez upomienky</div>
<div class="t" style="left:1348.1px;top:403.00px;font-size:16px;line-height:16px;font-weight:700;color:#cfd5de;letter-spacing:0px;">0</div>
<div class="t" style="left:1348.3px;top:423.00px;font-size:6.05px;line-height:6.05px;font-weight:400;color:#566072;letter-spacing:0px;">Neuhradene + 3 dni, email neodoslany</div>
<svg class="r" style="left:1875.5px;top:402px" width="20" height="16" viewBox="0 0 20 16" fill="none"><rect x="1.3" y="1.3" width="17.4" height="13.4" rx="1.8" stroke="#3b3248" stroke-width="1.7"/><path d="M1.8 2.5 L10 8.5 L18.2 2.5" stroke="#3b3248" stroke-width="1.7"/></svg>
<svg class="r" style="left:173.5px;top:456.5px;" width="5" height="8" viewBox="0 0 5 8" fill="none"><path d="M1 1 L4 4 L1 7" stroke="#c9cfd8" stroke-width="0.9"/></svg>
<div class="t" style="left:185.7px;top:458.00px;font-size:7.85px;line-height:7.85px;font-weight:600;color:#cdd3dc;letter-spacing:0px;">Problemove objednavky</div>
<div class="r" style="left:280.8px;top:456.2px;width:25.899999999999977px;height:10.800000000000011px;background:#2e1d2a;border-radius:3px;"></div>
<div class="t" style="left:285.4px;top:458.00px;font-size:7px;line-height:7px;font-weight:700;color:#a9546c;letter-spacing:0px;">5544</div>
<div class="t" style="left:171.7px;top:482.00px;font-size:7px;line-height:7px;font-weight:400;color:#5c6575;letter-spacing:0px;">Štítky:</div>
<div class="r" style="left:196.7px;top:480.4px;width:52.5px;height:10.400000000000034px;background:#151d2d;border-radius:3px;"></div>
<div class="r" style="left:200.1px;top:484px;width:4.800000000000011px;height:4.800000000000011px;background:#f0883e;border-radius:3px;"></div>
<div class="t" style="left:207.9px;top:484.00px;font-size:5.55px;line-height:5.55px;font-weight:600;color:#c6ccd5;letter-spacing:0px;">Reklamacia 16</div>
<div class="r" style="left:227px;top:523px;width:1682px;height:1px;background:#1f2838;"></div>
<div class="r" style="left:171.6px;top:500.2px;width:55.30000000000001px;height:23.80000000000001px;background:linear-gradient(#21193d,#1c1a3d);border-radius:4px 4px 0 0;"></div>
<div class="r" style="left:171.6px;top:522.4px;width:55.30000000000001px;height:1.8000000000000682px;background:#9a5fe6;"></div>
<svg class="r" style="left:181.7px;top:508.5px;" width="6" height="6" viewBox="0 0 6 6" fill="none"><path d="M0 0.8 H6 M0 3 H6 M0 5.2 H6" stroke="#e5e7eb" stroke-width="1.2"/></svg>
<div class="t" style="left:192.2px;top:508.00px;font-size:8px;line-height:8px;font-weight:700;color:#ffffff;letter-spacing:0px;">Vsetky</div>
<svg class="r" style="left:238.8px;top:508px;" width="7.5" height="7.5" viewBox="0 0 7.5 7.5" fill="none"><circle cx="3.75" cy="3.75" r="3.1" stroke="#a3acb9" stroke-width="0.8"/><path d="M3.75 2 V3.9 L5 4.9" stroke="#a3acb9" stroke-width="0.7"/></svg>
<div class="t" style="left:249.8px;top:508.00px;font-size:8.5px;line-height:8.5px;font-weight:400;color:#a3acb9;letter-spacing:0px;">Na vybavenie</div>
<svg class="r" style="left:321.5px;top:508.5px;" width="8" height="6.5" viewBox="0 0 8 6.5" fill="none"><path d="M0.5 0.8 H4.8 V4.8 H0.5 Z M4.8 2.2 H6.3 L7.5 3.5 V4.8 H4.8" stroke="#a3acb9" stroke-width="0.8"/><circle cx="2" cy="5.2" r="0.9" stroke="#a3acb9" stroke-width="0.6"/><circle cx="6" cy="5.2" r="0.9" stroke="#a3acb9" stroke-width="0.6"/></svg>
<div class="t" style="left:333px;top:508.00px;font-size:8.3px;line-height:8.3px;font-weight:400;color:#a3acb9;letter-spacing:0px;">Zaslane</div>
<svg class="r" style="left:383px;top:508px;" width="7.5" height="7.5" viewBox="0 0 7.5 7.5" fill="none"><circle cx="3.75" cy="3.75" r="3.1" stroke="#a3acb9" stroke-width="0.8"/><path d="M2.3 3.8 L3.4 4.8 L5.2 2.9" stroke="#a3acb9" stroke-width="0.7"/></svg>
<div class="t" style="left:394.5px;top:508.00px;font-size:8.6px;line-height:8.6px;font-weight:400;color:#a3acb9;letter-spacing:0px;">Vybavene</div>
<svg class="r" style="left:454px;top:509px;" width="6" height="6" viewBox="0 0 6 6" fill="none"><path d="M0.8 0.8 L5.2 5.2 M5.2 0.8 L0.8 5.2" stroke="#a3acb9" stroke-width="0.8"/></svg>
<div class="t" style="left:464px;top:508.00px;font-size:8.7px;line-height:8.7px;font-weight:400;color:#a3acb9;letter-spacing:0px;">Storno</div>
<div class="r" style="left:505px;top:503px;width:1px;height:17px;background:#262f40;"></div>
<svg class="r" style="left:521.5px;top:507.5px;" width="8" height="7.5" viewBox="0 0 8 7.5" fill="none"><path d="M4 0.7 L7.4 6.8 H0.6 Z" stroke="#a3acb9" stroke-width="0.8" stroke-linejoin="round"/><path d="M4 2.8 V4.6" stroke="#a3acb9" stroke-width="0.7"/></svg>
<div class="t" style="left:532.5px;top:508.00px;font-size:8.5px;line-height:8.5px;font-weight:400;color:#c9cfd8;letter-spacing:0px;">Na vybavenie</div>
<div class="r" style="left:587.5px;top:505.8px;width:11.799999999999955px;height:11.800000000000011px;background:#ea7a22;border-radius:6px;box-shadow:0 0 4px rgba(234,122,34,0.35);"></div>
<div class="t" style="left:591px;top:508.00px;font-size:7px;line-height:7px;font-weight:700;color:#ffffff;letter-spacing:0px;">2</div>
<div class="r" style="left:615px;top:503px;width:1px;height:17px;background:#262f40;"></div>
<svg class="r" style="left:631.5px;top:508px;" width="8" height="7.5" viewBox="0 0 8 7.5" fill="none"><rect x="0.6" y="1" width="6.8" height="5.5" rx="0.8" stroke="#a3acb9" stroke-width="0.8"/><path d="M0.6 3 H7.4" stroke="#a3acb9" stroke-width="0.7"/></svg>
<div class="t" style="left:642.7px;top:508.00px;font-size:8.5px;line-height:8.5px;font-weight:400;color:#a3acb9;letter-spacing:0px;">Comgate</div>
<div class="t" style="left:680.5px;top:508.00px;font-size:7.3px;line-height:7.3px;font-weight:400;color:#5d6676;letter-spacing:0px;">(598)</div>
<svg class="r" style="left:719.5px;top:508px;" width="8" height="7.5" viewBox="0 0 8 7.5" fill="none"><rect x="1.3" y="0.6" width="5.4" height="6.6" rx="0.6" stroke="#a3acb9" stroke-width="0.8"/><path d="M0.3 7.2 H7.7 M3 2.5 H5" stroke="#a3acb9" stroke-width="0.8"/></svg>
<div class="t" style="left:729.7px;top:508.00px;font-size:8.3px;line-height:8.3px;font-weight:400;color:#a3acb9;letter-spacing:0px;">FIO prevody</div>
<div class="t" style="left:779.4px;top:508.00px;font-size:7.2px;line-height:7.2px;font-weight:400;color:#5d6676;letter-spacing:0px;">(72)</div>
<svg class="r" style="left:813.5px;top:508px;" width="8" height="7.5" viewBox="0 0 8 7.5" fill="none"><circle cx="4" cy="3.75" r="3.1" stroke="#a3acb9" stroke-width="0.8"/><path d="M5 2.5 C4.6 2.1 3 2 3 3 C3 4 5.1 3.6 5 4.6 C4.9 5.4 3.5 5.4 3 4.9 M4 1.6 V5.9" stroke="#a3acb9" stroke-width="0.6"/></svg>
<div class="t" style="left:824.2px;top:508.00px;font-size:8.4px;line-height:8.4px;font-weight:400;color:#a3acb9;letter-spacing:0px;">Neuhradene</div>
<div class="t" style="left:874.5px;top:508.00px;font-size:7.3px;line-height:7.3px;font-weight:400;color:#5d6676;letter-spacing:0px;">(36)</div>
<div class="r" style="left:902px;top:503px;width:1px;height:17px;background:#262f40;"></div>
<svg class="r" style="left:920.5px;top:508px;" width="8" height="7.5" viewBox="0 0 8 7.5" fill="none"><path d="M4 0.6 L7.2 2.2 V5.5 L4 7 L0.8 5.5 V2.2 Z M0.8 2.2 L4 3.8 L7.2 2.2 M4 3.8 V7" stroke="#a3acb9" stroke-width="0.8"/></svg>
<div class="t" style="left:931.5px;top:508.00px;font-size:8.5px;line-height:8.5px;font-weight:400;color:#a3acb9;letter-spacing:0px;">Zasielky</div>
<div class="t" style="left:966px;top:508.00px;font-size:7.5px;line-height:7.5px;font-weight:400;color:#5d6676;letter-spacing:0px;">(0)</div>
<div class="t" style="left:171.8px;top:541.00px;font-size:7px;line-height:7px;font-weight:400;color:#78818f;letter-spacing:0px;">Obdobie:</div>
<div class="r" style="left:205.6px;top:537.8px;width:33.400000000000006px;height:13.0px;background:#4a5467;border-radius:4px;"></div>
<div class="t" style="left:211.4px;top:542.00px;font-size:6.7px;line-height:6.7px;font-weight:700;color:#ffffff;letter-spacing:0px;">Vsetko</div>
<div class="t" style="left:248.9px;top:541.00px;font-size:7.3px;line-height:7.3px;font-weight:400;color:#a3acb9;letter-spacing:0px;">60 dni</div>
<div class="t" style="left:284.8px;top:541.00px;font-size:7px;line-height:7px;font-weight:400;color:#a3acb9;letter-spacing:0px;">180 dni</div>
<div class="t" style="left:323.9px;top:541.00px;font-size:7px;line-height:7px;font-weight:400;color:#a3acb9;letter-spacing:0px;">1 rok</div>
<div class="t" style="left:171.8px;top:565.00px;font-size:7.1px;line-height:7.1px;font-weight:400;color:#5b6474;letter-spacing:0px;">Rychle filtre:</div>
<div class="r" style="left:219.2px;top:560.2px;width:65.60000000000002px;height:14.599999999999909px;background:#1b2435;border:1px solid #29334a;border-radius:8px;"></div>
<div class="t" style="left:225.9px;top:564.00px;font-size:7.05px;line-height:7.05px;font-weight:400;color:#aab2be;letter-spacing:0px;">GLS + uhradene</div>
<div class="r" style="left:290px;top:560.2px;width:64px;height:14.599999999999909px;background:#1b2435;border:1px solid #29334a;border-radius:8px;"></div>
<div class="t" style="left:297.5px;top:564.00px;font-size:7.2px;line-height:7.2px;font-weight:400;color:#aab2be;letter-spacing:0px;">GLS + dobierka</div>
<div class="r" style="left:359.5px;top:560.2px;width:76.80000000000001px;height:14.599999999999909px;background:#1b2435;border:1px solid #29334a;border-radius:8px;"></div>
<div class="t" style="left:367px;top:564.00px;font-size:7.3px;line-height:7.3px;font-weight:400;color:#aab2be;letter-spacing:0px;">Packeta + dobierka</div>
<div class="r" style="left:441.3px;top:560.2px;width:79.49999999999994px;height:14.599999999999909px;background:#1b2435;border:1px solid #29334a;border-radius:8px;"></div>
<div class="t" style="left:448.8px;top:564.00px;font-size:7.2px;line-height:7.2px;font-weight:400;color:#aab2be;letter-spacing:0px;">Packeta + uhradene</div>
<div class="r" style="left:525.5px;top:560.2px;width:67.0px;height:14.599999999999909px;background:#1b2435;border:1px solid #29334a;border-radius:8px;"></div>
<div class="t" style="left:532.5px;top:565.00px;font-size:7.1px;line-height:7.1px;font-weight:400;color:#aab2be;letter-spacing:0px;">DPD + uhradene</div>
<div class="r" style="left:597.7px;top:560.2px;width:65.79999999999995px;height:14.599999999999909px;background:#1b2435;border:1px solid #29334a;border-radius:8px;"></div>
<div class="t" style="left:605.5px;top:565.00px;font-size:7.15px;line-height:7.15px;font-weight:400;color:#aab2be;letter-spacing:0px;">DPD + dobierka</div>
<div class="r" style="left:668px;top:560.2px;width:79.39999999999998px;height:14.599999999999909px;background:#1b2435;border:1px solid #29334a;border-radius:8px;"></div>
<div class="t" style="left:675.8px;top:564.00px;font-size:7.25px;line-height:7.25px;font-weight:400;color:#aab2be;letter-spacing:0px;">Karta + neuhradene</div>
<div class="r" style="left:752px;top:560.2px;width:68.79999999999995px;height:14.599999999999909px;background:#1b2435;border:1px solid #29334a;border-radius:8px;"></div>
<div class="t" style="left:759.6px;top:564.00px;font-size:7.25px;line-height:7.25px;font-weight:400;color:#aab2be;letter-spacing:0px;">Len marketplace</div>
<svg class="r" style="left:171.8px;top:583px;" width="6.5" height="6.5" viewBox="0 0 6.5 6.5" fill="none"><rect x="0.5" y="0.5" width="5.5" height="5.5" rx="0.8" stroke="#6f82ee" stroke-width="0.8"/><path d="M2 0.5 V2.5 H4.5 V0.5" stroke="#6f82ee" stroke-width="0.7"/></svg>
<div class="t" style="left:180.6px;top:583.00px;font-size:7.3px;line-height:7.3px;font-weight:400;color:#6f82ee;letter-spacing:0px;">Ulozit aktualne filtre</div>
<div class="r" style="left:171.9px;top:598.1px;width:1736.6px;height:141.89999999999998px;background:linear-gradient(180deg,#1e283b,#1f293d);border:1px solid #283244;border-radius:5px;"></div>
<div class="t" style="left:181.4px;top:609.00px;font-size:7.1px;line-height:7.1px;font-weight:400;color:#c9cfd8;letter-spacing:0px;">Hladanie</div>
<div class="r" style="left:181.4px;top:619.1px;width:638.5px;height:22.5px;background:#111a2a;border:1px solid #2a3446;border-radius:4px;"></div>
<div class="t" style="left:189.7px;top:627.00px;font-size:8.3px;line-height:8.3px;font-weight:400;color:#b8c0cc;letter-spacing:0px;">Cislo obj., VS, email, meno, telefon...</div>
<div class="t" style="left:827.6px;top:609.00px;font-size:7.1px;line-height:7.1px;font-weight:400;color:#9aa3b0;letter-spacing:0px;">Eshop</div>
<div class="r" style="left:829.1px;top:619.4px;width:207.10000000000002px;height:22.399999999999977px;background:#111827;border:1px solid #29334a;border-radius:4px;"></div>
<div class="t" style="left:837.1px;top:628.00px;font-size:8.15px;line-height:8.15px;font-weight:400;color:#f5f7fa;letter-spacing:0px;">Vsetky</div>
<svg class="r" style="left:1023.2px;top:628.5px;" width="7" height="5" viewBox="0 0 7 5" fill="none"><path d="M0.8 1 L3.5 3.7 L6.2 1" stroke="#aab2be" stroke-width="0.9"/></svg>
<div class="t" style="left:1043.5px;top:609.00px;font-size:7.1px;line-height:7.1px;font-weight:400;color:#9aa3b0;letter-spacing:0px;">Krajina</div>
<div class="r" style="left:1044.5px;top:619.4px;width:207.20000000000005px;height:22.399999999999977px;background:#111827;border:1px solid #29334a;border-radius:4px;"></div>
<div class="t" style="left:1052.5px;top:628.00px;font-size:8.15px;line-height:8.15px;font-weight:400;color:#f5f7fa;letter-spacing:0px;">Vsetky</div>
<svg class="r" style="left:1238.7px;top:628.5px;" width="7" height="5" viewBox="0 0 7 5" fill="none"><path d="M0.8 1 L3.5 3.7 L6.2 1" stroke="#aab2be" stroke-width="0.9"/></svg>
<div class="t" style="left:1259.5px;top:609.00px;font-size:7.1px;line-height:7.1px;font-weight:400;color:#9aa3b0;letter-spacing:0px;">Zoradenie</div>
<div class="r" style="left:1260.3px;top:619.4px;width:207.0px;height:22.399999999999977px;background:#111827;border:1px solid #29334a;border-radius:4px;"></div>
<div class="t" style="left:1268.3px;top:627.00px;font-size:8.1px;line-height:8.1px;font-weight:400;color:#f5f7fa;letter-spacing:0px;">Najnovsie</div>
<svg class="r" style="left:1454.3px;top:628.5px;" width="7" height="5" viewBox="0 0 7 5" fill="none"><path d="M0.8 1 L3.5 3.7 L6.2 1" stroke="#aab2be" stroke-width="0.9"/></svg>
<div class="t" style="left:1474.8px;top:609.00px;font-size:7.1px;line-height:7.1px;font-weight:400;color:#9aa3b0;letter-spacing:0px;">Na str.</div>
<div class="r" style="left:1476.3px;top:619.4px;width:52.5px;height:22.399999999999977px;background:#111827;border:1px solid #29334a;border-radius:4px;"></div>
<div class="t" style="left:1484.3px;top:627.00px;font-size:8.1px;line-height:8.1px;font-weight:400;color:#f5f7fa;letter-spacing:0px;">50</div>
<svg class="r" style="left:1515.8px;top:628.5px;" width="7" height="5" viewBox="0 0 7 5" fill="none"><path d="M0.8 1 L3.5 3.7 L6.2 1" stroke="#aab2be" stroke-width="0.9"/></svg>
<div class="r" style="left:182.2px;top:651px;width:1717.5px;height:25.299999999999955px;background:linear-gradient(90deg,#1c2a45 0%,#22314f 40%,#1f2b41 70%,#1e283a 100%);border:1px solid #232f45;border-radius:5px;"></div>
<div class="t" style="left:188.6px;top:662.00px;font-size:5.5px;line-height:5.5px;font-weight:700;color:#3b72d6;letter-spacing:0.25px;">PREPRAVCA</div>
<div class="r" style="left:228.8px;top:656.2px;width:26.69999999999999px;height:14.699999999999932px;background:#1a2333;border:1px solid #243049;border-radius:8px;"></div>
<div class="t" style="left:235.7px;top:662.00px;font-size:6.8px;line-height:6.8px;font-weight:400;color:#b4bcc8;letter-spacing:0px;">GLS</div>
<div class="r" style="left:262.4px;top:656.2px;width:25.0px;height:14.699999999999932px;background:#1a2333;border:1px solid #243049;border-radius:8px;"></div>
<div class="t" style="left:266.7px;top:662.00px;font-size:6.8px;line-height:6.8px;font-weight:400;color:#b4bcc8;letter-spacing:0px;">DPD</div>
<div class="r" style="left:293.4px;top:656.2px;width:36.30000000000001px;height:14.699999999999932px;background:#1a2333;border:1px solid #243049;border-radius:8px;"></div>
<div class="t" style="left:299.5px;top:662.00px;font-size:6.8px;line-height:6.8px;font-weight:400;color:#b4bcc8;letter-spacing:0px;">Packeta</div>
<div class="r" style="left:181.4px;top:685.5px;width:173.70000000000002px;height:24.299999999999955px;background:#1b2737;border:1px solid #223044;border-radius:5px;"></div>
<div class="t" style="left:188.6px;top:696.00px;font-size:5.5px;line-height:5.5px;font-weight:700;color:#2e9c6a;letter-spacing:0.3px;">PLATBA</div>
<div class="r" style="left:228.8px;top:690.7px;width:27.599999999999966px;height:14.599999999999909px;background:#1b2434;border:1px solid #233046;border-radius:8px;"></div>
<div class="t" style="left:235.7px;top:696.00px;font-size:7.1px;line-height:7.1px;font-weight:400;color:#b4bcc8;letter-spacing:0px;">Karta</div>
<div class="r" style="left:264.1px;top:690.7px;width:37.099999999999966px;height:14.599999999999909px;background:#18463d;border:1px solid #2a6a58;border-radius:8px;"></div>
<div class="t" style="left:271.6px;top:696.00px;font-size:7.1px;line-height:7.1px;font-weight:400;color:#4fd39c;letter-spacing:0px;">Prevod</div>
<div class="r" style="left:306.5px;top:690.7px;width:41.5px;height:14.599999999999909px;background:#1b2434;border:1px solid #233046;border-radius:8px;"></div>
<div class="t" style="left:312.4px;top:696.00px;font-size:7.1px;line-height:7.1px;font-weight:400;color:#b4bcc8;letter-spacing:0px;">Dobierka</div>
<div class="r" style="left:363.4px;top:686px;width:148.0px;height:23.899999999999977px;background:#1b2737;border:1px solid #223044;border-radius:5px;"></div>
<div class="t" style="left:369.7px;top:696.00px;font-size:5.5px;line-height:5.5px;font-weight:700;color:#2e9c78;letter-spacing:0.3px;">UHRADA</div>
<div class="r" style="left:400.9px;top:688.5px;width:43.30000000000001px;height:16.200000000000045px;background:#1b2434;border:1px solid #2a3550;border-radius:8px;"></div>
<div class="t" style="left:406.7px;top:694.00px;font-size:7.2px;line-height:7.2px;font-weight:400;color:#b4bcc8;letter-spacing:0px;">Uhradene</div>
<div class="r" style="left:451.5px;top:688.5px;width:52.0px;height:16.200000000000045px;background:#1b2434;border:1px solid #2a3550;border-radius:8px;"></div>
<div class="t" style="left:456.7px;top:694.00px;font-size:7.2px;line-height:7.2px;font-weight:400;color:#b4bcc8;letter-spacing:0px;">Neuhradene</div>
</body></html>
